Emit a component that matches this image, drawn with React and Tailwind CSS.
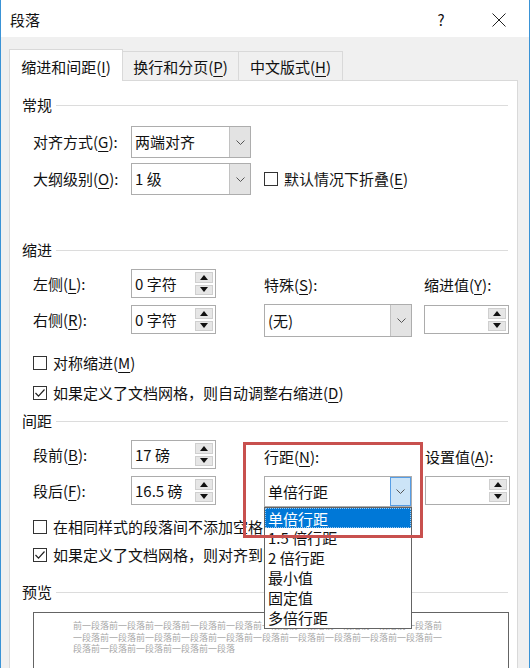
import React from 'react';

const K = ({ t, k, colon = true }) => (
  <span className="whitespace-nowrap">
    {t}(<span className="underline decoration-1 underline-offset-[3px]">{k}</span>){colon ? ':' : ''}
  </span>
);

const Chevron = () => (
  <svg width="9" height="5" viewBox="0 0 9 5">
    <polyline points="0.5,0.5 4.5,4.5 8.5,0.5" fill="none" stroke="#555" strokeWidth="1" />
  </svg>
);

const Heading = ({ title }) => (
  <div className="flex items-center h-[20px] pl-[12px] pr-[9px]">
    <span>{title}</span>
    <div className="flex-1 h-px bg-[#dcdcdc] ml-[4px]" />
  </div>
);

const Combo = ({ value, w = 'w-[120px]', h = 'h-[32px]', active = false }) => (
  <div className={`flex ${w} ${h} border border-[#adadad] bg-white`}>
    <span className="flex-1 pl-[3px] flex items-center">{value}</span>
    <div
      className={
        active
          ? 'w-[21px] border border-[#569de5] bg-[#cce4f7] flex items-center justify-center'
          : 'w-[21px] border-l border-[#c2c2c2] bg-[#e3e3e3] flex items-center justify-center'
      }
    >
      <Chevron />
    </div>
  </div>
);

const Tri = ({ up }) => (
  <svg width="8" height="5" viewBox="0 0 8 5">
    <polygon points={up ? '0,5 8,5 4,0' : '0,0 8,0 4,5'} fill="#111" />
  </svg>
);

const Spin = ({ value = '' }) => (
  <div className="flex w-[85px] h-[29px] border border-[#acacac] bg-white">
    <span className="flex-1 pl-[3px] flex items-center">{value}</span>
    <div className="w-[22px] flex flex-col gap-[2px] p-[2px]">
      <div className="flex-1 bg-[#e6e6e6] border border-[#cfcfcf] flex items-center justify-center">
        <Tri up />
      </div>
      <div className="flex-1 bg-[#e6e6e6] border border-[#cfcfcf] flex items-center justify-center">
        <Tri />
      </div>
    </div>
  </div>
);

const Check = ({ checked, children }) => (
  <div className="flex items-center h-[20px] gap-[6px]">
    <div className="w-[14px] h-[14px] border border-[#333] bg-white flex items-center justify-center">
      {checked && (
        <svg width="12" height="12" viewBox="0 0 12 12">
          <polyline points="1.5,6 4.5,9.2 10.5,2.5" fill="none" stroke="#222" strokeWidth="1.2" />
        </svg>
      )}
    </div>
    <span>{children}</span>
  </div>
);

const SpinRow = ({ label, value }) => (
  <div className="flex items-center">
    <div className="w-[98px]">{label}</div>
    <Spin value={value} />
  </div>
);

const lineOptions = ['单倍行距', '1.5 倍行距', '2 倍行距', '最小值', '固定值', '多倍行距'];

export default function App() {
  return (
    <div className="w-[530px] h-[668px] overflow-hidden bg-[#f0f0f0] border-x border-[#3a93d6] text-[15px] leading-[20px] text-[#111] font-['Noto_Sans_CJK_SC','Noto_Sans',sans-serif]">
      {/* title bar */}
      <div className="h-[37px] bg-white flex items-center pl-[9px] pt-[2px]">
        <span className="flex-1">段落</span>
        <span className="w-[14px] text-center mr-[44px]">?</span>
        <svg width="14" height="14" viewBox="0 0 14 14" className="mr-[23px]">
          <path d="M0.5 0.5 L13.5 13.5 M13.5 0.5 L0.5 13.5" stroke="#222" strokeWidth="1" />
        </svg>
      </div>

      {/* tabs */}
      <div className="flex items-end pl-[8px] pt-[12px]">
        <div className="relative z-10 -mb-px w-[114px] h-[32px] bg-white border border-b-0 border-[#d9d9d9] flex items-center justify-center pt-[3px]">
          <K t="缩进和间距" k="I" colon={false} />
        </div>
        <div className="w-[116px] h-[29px] border border-l-0 border-b-0 border-[#d9d9d9] flex items-center justify-center pt-[2px]">
          <K t="换行和分页" k="P" colon={false} />
        </div>
        <div className="w-[104px] h-[29px] border border-l-0 border-b-0 border-[#d9d9d9] flex items-center justify-center pt-[2px]">
          <K t="中文版式" k="H" colon={false} />
        </div>
      </div>

      {/* panel */}
      <div className="ml-[8px] w-[509px] h-[620px] bg-white border border-[#d9d9d9]">
        <div className="mt-[14px]">
          <Heading title="常规" />
        </div>
        <div className="mt-[11px] pl-[23px] flex items-center">
          <div className="w-[98px]"><K t="对齐方式" k="G" /></div>
          <Combo value="两端对齐" />
        </div>
        <div className="mt-[5px] pl-[23px] flex items-center">
          <div className="w-[98px]"><K t="大纲级别" k="O" /></div>
          <Combo value="1 级" />
          <div className="ml-[13px]">
            <Check><K t="默认情况下折叠" k="E" colon={false} /></Check>
          </div>
        </div>

        {/* indent */}
        <div className="mt-[45px]">
          <Heading title="缩进" />
        </div>
        <div className="mt-[9px] pl-[23px] flex">
          <div className="w-[231px] flex flex-col gap-[7px]">
            <SpinRow label={<K t="左侧" k="L" />} value="0 字符" />
            <SpinRow label={<K t="右侧" k="R" />} value="0 字符" />
          </div>
          <div className="w-[148px]">
            <div className="h-[35px] pt-[6px]"><K t="特殊" k="S" /></div>
            <Combo value="(无)" w="w-[148px]" h="h-[33px]" />
          </div>
          <div className="ml-[12px] w-[85px]">
            <div className="h-[36px] pt-[6px]"><K t="缩进值" k="Y" /></div>
            <Spin />
          </div>
        </div>
        <div className="mt-[16px] pl-[23px]">
          <Check><K t="对称缩进" k="M" colon={false} /></Check>
        </div>
        <div className="mt-[10px] pl-[23px]">
          <Check checked>
            如果定义了文档网格，则自动调整右缩进(<span className="underline decoration-1 underline-offset-[3px]">D</span>)
          </Check>
        </div>

        {/* spacing */}
        <div className="mt-[8px]">
          <Heading title="间距" />
        </div>
        <div className="mt-[9px] pl-[23px] flex">
          <div className="w-[231px] flex flex-col gap-[7px]">
            <SpinRow label={<K t="段前" k="B" />} value="17 磅" />
            <SpinRow label={<K t="段后" k="F" />} value="16.5 磅" />
          </div>
          <div className="w-[148px] relative">
            <div className="h-[36px] pt-[7px]"><K t="行距" k="N" /></div>
            <Combo value="单倍行距" w="w-[148px]" h="h-[31px]" active />
            <div className="absolute left-0 top-[67px] w-[148px] bg-white border border-[#646464] z-10">
              {lineOptions.map((o, i) => (
                <div
                  key={o}
                  className={
                    i === 0
                      ? 'h-[20px] leading-[20px] pl-[2px] bg-[#0078d7] text-white border border-dotted border-[#9cc8ee]'
                      : 'h-[20px] leading-[20px] pl-[3px]'
                  }
                >
                  {o}
                </div>
              ))}
            </div>
            <div className="absolute left-[-21px] top-[2px] w-[180px] h-[96px] border-[3px] border-[#c8504e] z-20" />
          </div>
          <div className="ml-[13px] w-[85px]">
            <div className="h-[36px] pt-[7px]"><K t="设置值" k="A" /></div>
            <Spin />
          </div>
        </div>
        <div className="mt-[10px] pl-[23px]">
          <Check>
            在相同样式的段落间不添加空格(<span className="underline decoration-1 underline-offset-[3px]">C</span>)
          </Check>
        </div>
        <div className="mt-[8px] pl-[23px]">
          <Check checked>
            如果定义了文档网格，则对齐到网格(<span className="underline decoration-1 underline-offset-[3px]">W</span>)
          </Check>
        </div>

        {/* preview */}
        <div className="mt-[17px]">
          <Heading title="预览" />
        </div>
        <div className="mt-[10px] ml-[23px] w-[476px] h-[120px] border border-[#646464] bg-white">
          <div className="pl-[39px] pt-[7px] w-[412px] text-[9px] leading-[11.5px] text-[#a8a8a8] break-all">
            {'前一段落'.repeat(25)}
          </div>
        </div>
      </div>
    </div>
  );
}
